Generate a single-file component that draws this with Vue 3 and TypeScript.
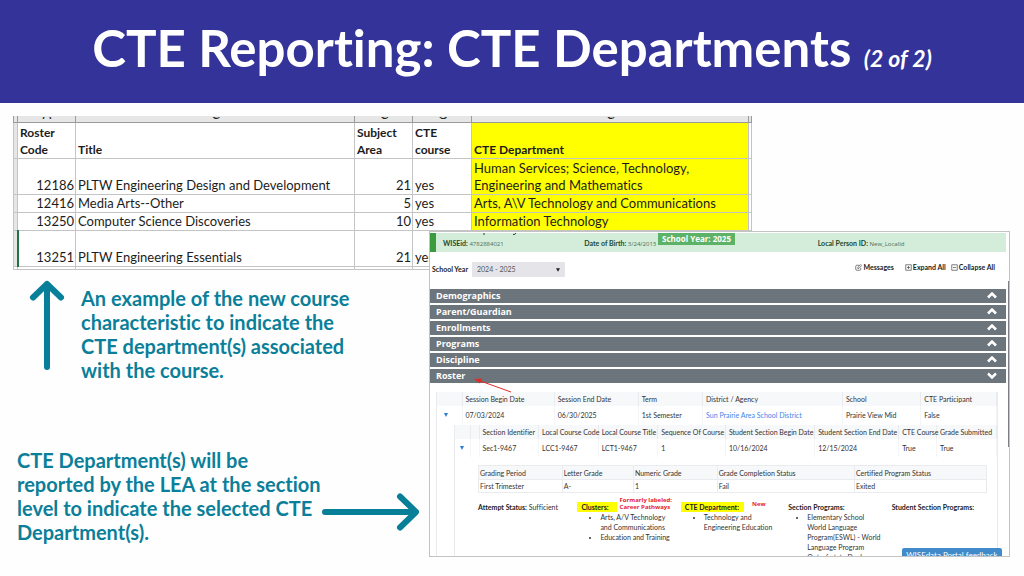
<script setup lang="ts">
import { ref } from 'vue'

interface Course {
  code: number
  title: string
  area: number
  cte: string
  department: string
  tall: boolean
}

const courses: Course[] = [
  { code: 12186, title: 'PLTW Engineering Design and Development', area: 21, cte: 'yes', department: 'Human Services; Science, Technology, Engineering and Mathematics', tall: true },
  { code: 12416, title: 'Media Arts--Other', area: 5, cte: 'yes', department: 'Arts, A\\V Technology and Communications', tall: false },
  { code: 13250, title: 'Computer Science Discoveries', area: 10, cte: 'yes', department: 'Information Technology', tall: false },
  { code: 13251, title: 'PLTW Engineering Essentials', area: 21, cte: 'yes', department: '', tall: true },
]

const sections = ref([
  { name: 'Demographics', open: false },
  { name: 'Parent/Guardian', open: false },
  { name: 'Enrollments', open: false },
  { name: 'Programs', open: false },
  { name: 'Discipline', open: false },
  { name: 'Roster', open: true },
])

const year = ref('2024 - 2025')
</script>

<template>
  <main class="slide">
    <header class="banner">
      <h1>CTE Reporting: CTE Departments <em>(2 of 2)</em></h1>
    </header>

    <div class="content">
      <table class="sheet">
        <colgroup>
          <col class="s-gutter" /><col class="s-code" /><col class="s-title" /><col class="s-area" />
          <col class="s-cte" /><col class="s-dept" /><col class="s-edge" />
        </colgroup>
        <thead>
          <tr class="letters">
            <td></td>
            <td><span>A</span></td><td><span>C</span></td><td><span>C</span></td>
            <td><span>G</span></td><td><span>C</span></td><td></td>
          </tr>
          <tr class="tall">
            <td class="gutter"></td>
            <th>Roster<br />Code</th>
            <th>Title</th>
            <th>Subject<br />Area</th>
            <th>CTE<br />course</th>
            <th class="mark">CTE Department</th>
            <td></td>
          </tr>
        </thead>
        <tbody>
          <tr v-for="(c, i) in courses" :key="c.code" :class="{ tall: c.tall }">
            <td class="gutter" :class="{ selected: i === 3 }"></td>
            <td class="num">{{ c.code }}</td>
            <td>{{ c.title }}</td>
            <td class="num">{{ c.area }}</td>
            <td>{{ c.cte }}</td>
            <td class="mark"><div class="dept">{{ c.department }}</div></td>
            <td></td>
          </tr>
          <tr class="sliver"><td></td><td></td><td></td><td></td><td></td><td></td><td></td></tr>
        </tbody>
      </table>

      <section class="note first">
        <svg class="up" viewBox="0 0 36 90" aria-hidden="true">
          <path d="M18 87V4M4 17.500L18 4l14 13.500" />
        </svg>
        <p>An example of the new course<br />characteristic to indicate the<br />CTE department(s) associated<br />with the course.</p>
      </section>

      <section class="note second">
        <p>CTE Department(s) will be<br />reported by the LEA at the section<br />level to indicate the selected CTE<br />Department(s).</p>
        <svg class="right" viewBox="0 0 100 40" aria-hidden="true">
          <path d="M4 20h90M79 4.500L95 20 79 35.500" />
        </svg>
      </section>

      <section class="portal">
        <div class="student">
          <svg class="tails" viewBox="0 0 34 3" aria-hidden="true"><path d="M1 0v2M33 0q-1 2-3 1.500" /></svg>
          <span><b>WISEid:</b> 4782884021</span>
          <span><b>Date of Birth:</b> 3/24/2013</span>
          <span><b>Local Person ID:</b> New_LocalId</span>
          <strong class="badge">School Year: 2025</strong>
        </div>

        <div class="toolbar">
          <label for="year">School Year</label>
          <div class="pick">
            <select id="year" v-model="year"><option>2024 - 2025</option></select>
            <svg viewBox="0 0 6 5" aria-hidden="true"><path d="M0 0h6L3 5z" /></svg>
          </div>
          <div class="actions">
            <button type="button" class="messages">
              <svg viewBox="0 0 14 14" aria-hidden="true"><path d="M9 2.500H3.500Q1.500 2.500 1.500 4.500v6q0 2 2 2h6q2 0 2-2V8M5.500 9l.5-2.500L11.500 1l2 2L8 8.500z" /></svg>Messages
            </button>
            <button type="button">
              <svg viewBox="0 0 14 14" aria-hidden="true"><path d="M1.500 1.500h11v11h-11zM4 7h6M7 4v6" /></svg>Expand All
            </button>
            <button type="button">
              <svg viewBox="0 0 14 14" aria-hidden="true"><path d="M1.500 1.500h11v11h-11zM4 7h6" /></svg>Collapse All
            </button>
          </div>
        </div>

        <div class="bars">
          <button v-for="s in sections" :key="s.name" type="button" :aria-expanded="s.open" @click="s.open = !s.open">
            <span>{{ s.name }}</span>
            <svg viewBox="0 0 10 7" aria-hidden="true">
              <path :d="s.open ? 'M1 1.500l4 4 4-4' : 'M1 5.500l4-4 4 4'" />
            </svg>
          </button>
        </div>
        <svg class="pointer" viewBox="0 0 38 15" aria-hidden="true">
          <path class="shaft" d="M5 2.500L37 14" /><path class="head" d="M0 1l8-.5-2 5z" />
        </svg>

        <div class="roster">
          <table class="grid sessions">
            <colgroup><col class="w1" /><col class="w2" /><col class="w3" /><col class="w4" /><col class="w5" /><col class="w6" /><col class="w7" /></colgroup>
            <thead>
              <tr><th></th><th>Session Begin Date</th><th>Session End Date</th><th>Term</th><th>District / Agency</th><th>School</th><th>CTE Participant</th></tr>
            </thead>
            <tbody>
              <tr>
                <td class="toggle"><svg viewBox="0 0 4 4" aria-hidden="true"><path d="M0 0h4L2 4z" /></svg></td>
                <td>07/03/2024</td><td>06/30/2025</td><td>1st Semester</td>
                <td><a href="#">Sun Prairie Area School District</a></td>
                <td>Prairie View Mid</td><td>False</td>
              </tr>
            </tbody>
          </table>

          <div class="nested">
            <table class="grid classes">
              <colgroup><col class="c0" /><col class="c1" /><col class="c2" /><col class="c3" /><col class="c4" /><col class="c5" /><col class="c6" /><col class="c7" /><col class="c8" /><col class="c9" /></colgroup>
              <thead>
                <tr><th></th><th></th><th>Section Identifier</th><th>Local Course Code</th><th>Local Course Title</th><th>Sequence Of Course</th><th>Student Section Begin Date</th><th>Student Section End Date</th><th>CTE Course</th><th>Grade Submitted</th></tr>
              </thead>
              <tbody>
                <tr>
                  <td class="toggle"><svg viewBox="0 0 4 4" aria-hidden="true"><path d="M0 0h4L2 4z" /></svg></td>
                  <td></td><td>Sec1-9467</td><td>LCC1-9467</td><td>LCT1-9467</td><td>1</td><td>10/16/2024</td><td>12/15/2024</td><td>True</td><td>True</td>
                </tr>
              </tbody>
            </table>

            <div class="detail">
              <table class="grid grades">
                <colgroup><col class="g1" /><col class="g2" /><col class="g3" /><col class="g4" /><col class="g5" /></colgroup>
                <thead>
                  <tr><th>Grading Period</th><th>Letter Grade</th><th>Numeric Grade</th><th>Grade Completion Status</th><th>Certified Program Status</th></tr>
                </thead>
                <tbody>
                  <tr><td>First Trimester</td><td>A-</td><td>1</td><td>Fail</td><td>Exited</td></tr>
                </tbody>
              </table>

              <div class="programs">
                <div><b>Attempt Status:</b> Sufficient</div>
                <div>
                  <b class="hl clusters">Clusters:</b><strong class="red two">Formarly labeled:<br />Career Pathways</strong>
                  <ul><li>Arts, A/V Technology<br />and Communications</li><li>Education and Training</li></ul>
                </div>
                <div>
                  <b class="hl">CTE Department:</b><strong class="red">New</strong>
                  <ul><li>Technology and<br />Engineering Education</li></ul>
                </div>
                <div>
                  <b>Section Programs:</b>
                  <ul class="wide"><li>Elementary School<br />World Language<br />Program(ESWL) - World<br />Language Program</li><li>Out-of-state Dual</li></ul>
                </div>
                <div><b>Student Section Programs:</b></div>
              </div>
            </div>
          </div>
        </div>
        <button type="button" class="feedback">WISEdata Portal feedback</button>
        <i class="thumb"></i>
      </section>
    </div>
  </main>
</template>

<style>
body {
  margin: 0;
  background: #fefefe;
}
</style>

<style scoped>
* {
  box-sizing: border-box;
}
.slide {
  min-height: 100vh;
  font-family: Lato, 'Liberation Sans', sans-serif;
  font-variant-ligatures: none;
  background: #fefefe;
}
.banner {
  background: #333399;
  color: #fff;
  text-align: center;
  padding: 16px 0 23px;
}
h1 {
  margin: 0;
  font-size: 51px;
  line-height: 64px;
  font-weight: 700;
  white-space: nowrap;
}
h1 em {
  font-size: 23px;
  line-height: 1;
}
.content {
  position: relative;
  padding: 13px;
}

/* spreadsheet */
.sheet {
  width: 74%;
  table-layout: fixed;
  border-collapse: collapse;
  color: #1c1c1c;
  font-size: 13px;
  line-height: 17px;
  background: #fff;
}
.sheet th {
  font-size: 12px;
}
.s-gutter { width: 4px; }
.s-code { width: 58px; }
.s-title { width: 279px; }
.s-area { width: 58px; }
.s-cte { width: 59px; }
.s-edge { width: 3px; }
.sheet td,
.sheet th {
  height: 18px;
  padding: 0 1px 0 2px;
  border: 1px solid #c4c4c4;
  vertical-align: bottom;
  text-align: left;
  white-space: nowrap;
}
.sheet .num {
  text-align: right;
}
.sheet .tall td,
.sheet .tall th {
  height: 36px;
}
.sheet .letters td {
  height: 6px;
  line-height: 5px;
  background: #e6e6e6;
  border-color: #9b9b9b;
  border-top: 0;
}
.letters span {
  display: flex;
  align-items: flex-end;
  justify-content: center;
  height: 5px;
  padding-bottom: 3px;
  overflow: hidden;
  line-height: 9px;
}
.sheet .mark {
  background: #ffff00;
}
.dept {
  max-width: 240px;
  white-space: normal;
}
.sheet tr:not(.tall) .dept {
  white-space: nowrap;
}
.sheet .gutter {
  background: #e6e6e6;
}
.sheet .selected {
  border-right: 2px solid #217346;
}
.sheet .sliver td {
  height: 3px;
}

/* captions */
.note {
  display: flex;
  color: #0b7f99;
  font-size: 20px;
  line-height: 24px;
  font-weight: 700;
}
.note p {
  margin: 0;
  white-space: nowrap;
}
.note path {
  fill: none;
  stroke: #087f99;
  stroke-width: 6;
  stroke-linecap: round;
  stroke-linejoin: round;
}
.first {
  gap: 16px;
  padding: 16px 0 0 16px;
}
.up {
  width: 36px;
  height: 90px;
  margin-top: -6px;
}
.second {
  padding: 66px 0 0 4px;
}
.right {
  width: 100px;
  height: 40px;
  margin-top: 44px;
}

/* student portal */
.portal {
  position: absolute;
  left: 429px;
  right: 14px;
  top: 128px;
  height: 326px;
  overflow: hidden;
  padding-top: 1px;
  background: #fff;
  border: 1px solid #c3c3c3;
  font-size: 7px;
  color: #333;
}
.student {
  position: relative;
  display: grid;
  grid-template-columns: 141fr 233fr 188fr;
  height: 19px;
  margin-right: 3px;
  padding: 1px 0 0 7px;
  align-items: center;
  background: #d4edda;
  border-left: 6px solid #3b9b3f;
  white-space: nowrap;
  color: #4d6b55;
  font-family: 'Open Sans', sans-serif;
  font-size: 6px;
}
.student b {
  color: #23482e;
  font-family: Lato, sans-serif;
  font-size: 7px;
}
.tails {
  position: absolute;
  left: 47px;
  top: 0;
  width: 34px;
  height: 3px;
  fill: none;
  stroke: #333;
}
.badge {
  position: absolute;
  left: 222px;
  top: 0;
  width: 77px;
  line-height: 12px;
  background: #5cb368;
  color: #fff;
  font-size: 8px;
  text-align: center;
}
.toolbar {
  display: flex;
  align-items: center;
  height: 37px;
  padding: 0 14px 3px 2px;
  color: #222;
}
.toolbar label {
  width: 40px;
  font-weight: 700;
  white-space: nowrap;
}
.pick {
  position: relative;
}
.pick select {
  display: block;
  appearance: none;
  width: 93px;
  height: 15px;
  padding: 0 5px;
  border: 0;
  border-radius: 1px;
  background: #e5e5e9;
  color: #555;
  font: 7px Lato, sans-serif;
}
.pick svg {
  position: absolute;
  right: 5px;
  top: 6px;
  width: 4px;
  height: 4px;
  fill: #222;
}
.actions {
  display: flex;
  gap: 5px;
  margin-left: auto;
  padding-bottom: 4px;
}
.actions button {
  display: flex;
  align-items: center;
  gap: 1px;
  padding: 0;
  border: 0;
  background: none;
  color: #222;
  font: 700 7px Lato, sans-serif;
}
.actions .messages {
  margin-right: 6px;
}
.actions svg {
  width: 7px;
  height: 7px;
  fill: none;
  stroke: #555;
  stroke-width: 1.500;
}
.bars {
  display: grid;
  gap: 2px;
  margin-right: 3px;
}
.bars button {
  display: flex;
  align-items: center;
  justify-content: space-between;
  height: 14px;
  padding: 0 9px 1px 6px;
  border: 0;
  background: #6c757b;
  color: #fff;
  font: 700 9px/13px 'Open Sans', sans-serif;
}
.bars svg {
  width: 10px;
  height: 7px;
  fill: none;
  stroke: #fff;
  stroke-width: 2.500;
}
.pointer {
  position: absolute;
  left: 44px;
  top: 146px;
  width: 38px;
  height: 15px;
}
.shaft {
  stroke: #e02a2a;
  fill: none;
}
.head {
  fill: #e02a2a;
}
.roster {
  margin: 9px 11px 0 6px;
  border: solid #e9ebee;
  border-width: 0 1px;
}
.grid {
  width: 100%;
  table-layout: fixed;
  border-collapse: collapse;
  line-height: 10px;
  color: #333;
}
.grid th,
.grid td {
  padding: 0 0 0 3px;
  text-align: left;
  font-weight: 400;
  white-space: nowrap;
}
.grid th {
  height: 14px;
  background: #f7f8fa;
  border-right: 1px solid #e9ebee;
}
.grid.sessions td {
  height: 19px;
  padding-bottom: 2px;
}
.classes td {
  height: 18px;
}
.sessions td,
.classes td {
  border-right: 1px solid #f4f5f7;
}
.grid .toggle {
  padding-left: 7px;
}
.toggle svg {
  display: block;
  width: 4px;
  height: 4px;
  fill: #2b7cd3;
}
.grid a {
  color: #3f86e8;
  text-decoration: none;
}
.w1 { width: 25px; }
.w2 { width: 16.5%; }
.w3 { width: 15%; }
.w4 { width: 11.5%; }
.w5 { width: 25%; }
.w6 { width: 14%; }
.nested {
  margin-left: 17px;
  border-left: 1px solid #e9ebee;
}
.nested .toggle {
  padding-left: 5px;
}
.c0 { width: 15px; }
.c1 { width: 9px; }
.c2 { width: 11%; }
.c3 { width: 11%; }
.c4 { width: 11%; }
.c5 { width: 12.5%; }
.c6 { width: 16.5%; }
.c7 { width: 15.5%; }
.c8 { width: 7%; }
.detail {
  padding: 8px 10px 0 23px;
}
.grades th,
.grades td {
  border: 1px solid #e9ebee;
  padding-left: 1px;
}
.grades td {
  height: 13px;
}
.g1 { width: 16.5%; }
.g2 { width: 14%; }
.g3 { width: 16.5%; }
.g4 { width: 27%; }
.programs {
  display: grid;
  grid-template-columns: 99fr 103fr 107fr 103fr 95fr;
  margin-top: 8px;
  line-height: 10px;
  white-space: nowrap;
}
.programs > div {
  position: relative;
  padding-top: 1px;
}
.programs b {
  color: #222;
}
.hl {
  display: inline-block;
  padding: 0 5px 0 4px;
  background: #ffff00;
}
.clusters {
  padding-right: 8px;
}
.red {
  position: absolute;
  margin-left: 8px;
  top: 0;
  color: #e8222c;
  font: 700 6px/7px 'Open Sans', sans-serif;
}
.red.two {
  top: -4px;
  margin-left: 3px;
}
.programs ul {
  margin: 0;
  padding-left: 23px;
}
.programs .wide {
  padding-left: 19px;
}
.feedback {
  position: absolute;
  right: 7px;
  bottom: -9px;
  width: 100px;
  height: 17px;
  padding: 0 0 3px;
  border: 0;
  border-radius: 2px;
  background: #428bca;
  color: #fff;
  font: 8px/14px Lato, sans-serif;
  white-space: nowrap;
}
.thumb {
  position: absolute;
  right: 0;
  top: 49px;
  width: 1px;
  height: 166px;
  background: #7c8085;
}
</style>
